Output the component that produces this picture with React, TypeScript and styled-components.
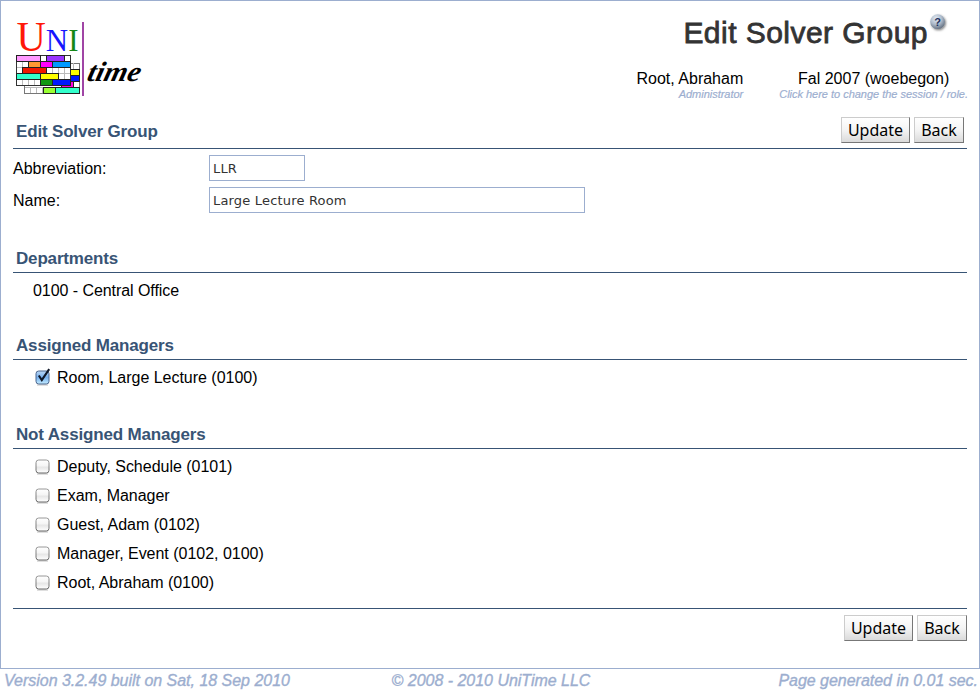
import React from 'react';
import styled, { createGlobalStyle } from 'styled-components';

const GlobalStyle = createGlobalStyle`
  * { box-sizing: border-box; }
  body {
    margin: 0;
    background: #fff;
    color: #000;
    font: 16px/18px "Liberation Sans", Arial, sans-serif;
  }
`;

const Page = styled.div`
  display: flex;
  flex-direction: column;
  width: 980px;
  height: 691px;
  overflow: hidden;
`;

const Frame = styled.main`
  height: 669px;
  flex: none;
  border: 1px solid #9caecf;
  padding: 0 12px;
`;

const Header = styled.header`
  display: flex;
  justify-content: space-between;
  height: 112px;
`;

const Logo = styled.svg`
  display: block;
  margin-top: 4px;
`;

const HeaderInfo = styled.div`
  display: flex;
  flex-direction: column;
  align-items: flex-end;
  margin-right: -1px;
`;

const TitleRow = styled.div`
  display: flex;
  align-items: flex-start;
  height: 69px;
  margin-right: 20px;
`;

const Title = styled.h1`
  margin: 14px 1px 0 0;
  color: #333;
  font-size: 30px;
  line-height: 36px;
  font-weight: 400;
  letter-spacing: 0.46px;
  -webkit-text-stroke: 0.8px #333;
  white-space: nowrap;
`;

const HelpIcon = styled.svg`
  display: block;
  margin-top: 12px;
`;

const Account = styled.div`
  display: flex;
  gap: 36px;
`;

const AccountItem = styled.div<{ $center?: boolean }>`
  text-align: ${(p) => (p.$center ? 'center' : 'right')};
  white-space: nowrap;
`;

const AccountNote = styled.div`
  color: #9caecf;
  font-size: 11px;
  line-height: 13px;
  font-style: italic;
  letter-spacing: -0.02px;
  -webkit-text-stroke: 0.2px #9caecf;
`;

const Section = styled.section<{ $height: number }>`
  height: ${(p) => p.$height}px;
`;

const SectionHead = styled.div<{ $height: number }>`
  display: flex;
  justify-content: space-between;
  align-items: flex-end;
  height: ${(p) => p.$height}px;
  border-bottom: 1px solid #385475;
`;

const SectionTitle = styled.h2<{ $raised?: boolean }>`
  margin: 0;
  padding: 0 0 ${(p) => (p.$raised ? 6 : 3)}px 3px;
  color: #385475;
  font-size: 17px;
  line-height: 20px;
  font-weight: 700;
  letter-spacing: -0.17px;
`;

const Actions = styled.div<{ $footer?: boolean }>`
  display: flex;
  justify-content: flex-end;
  gap: 4px;
  padding: ${(p) => (p.$footer ? '6px 0 0' : '0 3px 5px 0')};
`;

const Button = styled.button<{ $width: number }>`
  width: ${(p) => p.$width}px;
  height: 26px;
  padding: 0;
  border: 1px solid;
  border-color: #ccc #777 #777 #ccc;
  background: linear-gradient(#fff, #f4f4f4 50%, #dadada);
  color: #000;
  font: 16px/22px "Noto Sans", "Open Sans", sans-serif;
  text-align: center;
`;

const Field = styled.label`
  display: grid;
  grid-template-columns: 196px auto;
  justify-content: start;
  align-items: center;
  height: 26px;
  margin-top: 6px;
`;

const FieldName = styled.span`
  padding-top: 2px;
`;

const Input = styled.input<{ $width: number }>`
  width: ${(p) => p.$width}px;
  height: 26px;
  padding: 1px 3px 0;
  border: 1px solid #9caecf;
  background: #fff;
  color: #333;
  font: 13px "DejaVu Sans", Verdana, sans-serif;
  letter-spacing: 0.18px;
  outline: none;
`;

const Department = styled.div`
  padding: 9px 0 0 20px;
  letter-spacing: -0.06px;
`;

const ManagerRow = styled.label`
  display: flex;
  align-items: center;
  height: 29px;
  padding-left: 21px;
  gap: 5px;
  letter-spacing: -0.02px;
`;

const Box = styled.svg`
  display: block;
  margin-bottom: 2px;
`;

const ManagerList = styled.div`
  padding-top: 3px;
`;

const BottomBar = styled.div`
  border-top: 1px solid #385475;
`;

const Footer = styled.footer`
  display: grid;
  grid-template-columns: 1fr auto 1fr;
  padding: 3px 2px 0 4px;
  color: #9caecf;
  font-size: 16px;
  font-style: italic;
  letter-spacing: -0.02px;
  -webkit-text-stroke: 0.35px #9caecf;
  white-space: nowrap;

  & > :last-child { text-align: right; }
`;

type Block = [x: number, y: number, width: number, color: string];

const backBlocks: Block[] = [
  [57.5, 54.5, 9, '#ffff00'],
  [57.5, 60.5, 9, '#0018ff'],
  [48.5, 66.5, 12, '#ff00e0'],
  [30.5, 72.5, 12, '#99ff33'],
  [42.5, 72.5, 24, '#33ffcc'],
];

const frontBlocks: Block[] = [
  [3.5, 40.5, 24, '#ff99ff'],
  [33.5, 40.5, 18, '#9933ff'],
  [15.5, 46.5, 12, '#ff9933'],
  [27.5, 46.5, 12, '#ff00ff'],
  [39.5, 46.5, 18, '#0099ff'],
  [9.5, 52.5, 24, '#f01800'],
  [3.5, 58.5, 24, '#33ffcc'],
  [27.5, 58.5, 18, '#ffff00'],
  [27.5, 64.5, 12, '#129912'],
  [39.5, 64.5, 18, '#0018ff'],
];

const drawBlocks = (blocks: Block[]) =>
  blocks.map(([x, y, width, color]) => (
    <rect key={`${x}-${y}`} x={x} y={y} width={width} height="6" fill={color} stroke="#222" />
  ));

function UniTimeLogo() {
  return (
    <Logo width="132" height="94" viewBox="0 -10 132 94" aria-label="UniTime">
      <text x="3.5" y="36" fontFamily="Liberation Serif, serif" textLength="62" lengthAdjust="spacingAndGlyphs">
        <tspan fontSize="42" fill="#ff1808">U</tspan>
        <tspan fontSize="32" fill="#1616ff">N</tspan>
        <tspan fontSize="32" fill="#168816">I</tspan>
      </text>
      <rect x="11.5" y="48.5" width="55" height="30" fill="#fff" stroke="#777" />
      <path
        d="M17.5 72v6M23.5 72v6M29.5 72v6M35.5 72v6M60.5 48v24M57 54.5h9M57 60.5h9M57 66.5h9M12 72.5h54"
        stroke="#bbb"
      />
      {drawBlocks(backBlocks)}
      <rect x="3.5" y="40.5" width="54" height="30" fill="#fff" stroke="#333" />
      <path
        d="M9.5 41v29M15.5 41v29M21.5 41v29M27.5 41v29M33.5 41v29M39.5 41v29M45.5 41v29M51.5 41v29M4 46.5h53M4 52.5h53M4 58.5h53M4 64.5h53"
        stroke="#bbb"
      />
      {drawBlocks(frontBlocks)}
      <rect x="69" y="7" width="2" height="74" fill="#a045a5" />
      <text
        transform="translate(73 66) skewX(-14)"
        fontFamily="Liberation Serif, serif"
        fontSize="28"
        fontStyle="italic"
        fontWeight="700"
        textLength="53"
        lengthAdjust="spacingAndGlyphs"
      >
        time
      </text>
    </Logo>
  );
}

function Help() {
  return (
    <HelpIcon width="19" height="20" viewBox="0 0 19 20" aria-label="Help">
      <defs>
        <radialGradient id="helpBall" cx="40%" cy="30%" r="70%">
          <stop offset="0" stopColor="#e6edf5" />
          <stop offset=".55" stopColor="#aebbcb" />
          <stop offset="1" stopColor="#687484" />
        </radialGradient>
        <filter id="helpShadow" x="-30%" y="-30%" width="170%" height="170%">
          <feDropShadow dx="1" dy="1.2" stdDeviation="0.9" floodOpacity="0.5" />
        </filter>
      </defs>
      <circle cx="8.6" cy="8.7" r="7.4" fill="url(#helpBall)" filter="url(#helpShadow)" />
      <text x="8.5" y="12.5" fontSize="11" fontWeight="700" textAnchor="middle" fill="#22305c">?</text>
    </HelpIcon>
  );
}

function Checkbox({ checked = false }: { checked?: boolean }) {
  const fill = checked ? 'url(#boxOn)' : 'url(#boxOff)';
  return (
    <Box width="18" height="18" viewBox="0 0 18 18" role="checkbox" aria-checked={checked}>
      <defs>
        <linearGradient id="boxOff" x2="0" y2="1">
          <stop offset="0" stopColor="#fff" />
          <stop offset=".45" stopColor="#f5f5f5" />
          <stop offset=".55" stopColor="#e6e6e6" />
          <stop offset="1" stopColor="#fff" />
        </linearGradient>
        <linearGradient id="boxOn" x2="0" y2="1">
          <stop offset="0" stopColor="#bcd8f4" />
          <stop offset=".5" stopColor="#77b0ee" />
          <stop offset="1" stopColor="#c5edff" />
        </linearGradient>
        <linearGradient id="boxEdge" x2="0" y2="1">
          <stop offset="0" stopColor="#999" />
          <stop offset="1" stopColor="#666" />
        </linearGradient>
      </defs>
      <path d="M3 17h11" stroke="#000" strokeOpacity=".25" />
      <rect x="2" y="3" width="13" height="13" rx="2.7" fill={fill} stroke={checked ? '#4b668f' : 'url(#boxEdge)'} />
      {checked && <path d="M4.8 7.5 7.8 12 15.2 1.2" fill="none" stroke="#101828" strokeWidth="2.1" />}
    </Box>
  );
}

function Manager({ name, checked }: { name: string; checked?: boolean }) {
  return (
    <ManagerRow>
      <Checkbox checked={checked} />
      {name}
    </ManagerRow>
  );
}

function ActionButtons({ footer }: { footer?: boolean }) {
  return (
    <Actions $footer={footer}>
      <Button type="button" $width={69}>Update</Button>
      <Button type="button" $width={50}>Back</Button>
    </Actions>
  );
}

const unassigned = [
  'Deputy, Schedule (0101)',
  'Exam, Manager',
  'Guest, Adam (0102)',
  'Manager, Event (0102, 0100)',
  'Root, Abraham (0100)',
];

export default function App() {
  return (
    <>
      <GlobalStyle />
      <Page>
        <Frame>
          <Header>
            <UniTimeLogo />
            <HeaderInfo>
              <TitleRow>
                <Title>Edit Solver Group</Title>
                <Help />
              </TitleRow>
              <Account>
                <AccountItem>
                  Root, Abraham
                  <AccountNote>Administrator</AccountNote>
                </AccountItem>
                <AccountItem $center>
                  Fal 2007 (woebegon)
                  <AccountNote>Click here to change the session / role.</AccountNote>
                </AccountItem>
              </Account>
            </HeaderInfo>
          </Header>
          <Section $height={128}>
            <SectionHead $height={36}>
              <SectionTitle $raised>Edit Solver Group</SectionTitle>
              <ActionButtons />
            </SectionHead>
            <Field>
              <FieldName>Abbreviation:</FieldName>
              <Input $width={96} defaultValue="LLR" />
            </Field>
            <Field>
              <FieldName>Name:</FieldName>
              <Input $width={376} defaultValue="Large Lecture Room" />
            </Field>
          </Section>
          <Section $height={87}>
            <SectionHead $height={32}>
              <SectionTitle>Departments</SectionTitle>
            </SectionHead>
            <Department>0100 - Central Office</Department>
          </Section>
          <Section $height={89}>
            <SectionHead $height={32}>
              <SectionTitle>Assigned Managers</SectionTitle>
            </SectionHead>
            <ManagerList>
              <Manager name="Room, Large Lecture (0100)" checked />
            </ManagerList>
          </Section>
          <Section $height={191}>
            <SectionHead $height={32}>
              <SectionTitle>Not Assigned Managers</SectionTitle>
            </SectionHead>
            <ManagerList>
              {unassigned.map((name) => (
                <Manager key={name} name={name} />
              ))}
            </ManagerList>
          </Section>
          <BottomBar>
            <ActionButtons footer />
          </BottomBar>
        </Frame>
        <Footer>
          <span>Version 3.2.49 built on Sat, 18 Sep 2010</span>
          <span>© 2008 - 2010 UniTime LLC</span>
          <span>Page generated in 0.01 sec.</span>
        </Footer>
      </Page>
    </>
  );
}
